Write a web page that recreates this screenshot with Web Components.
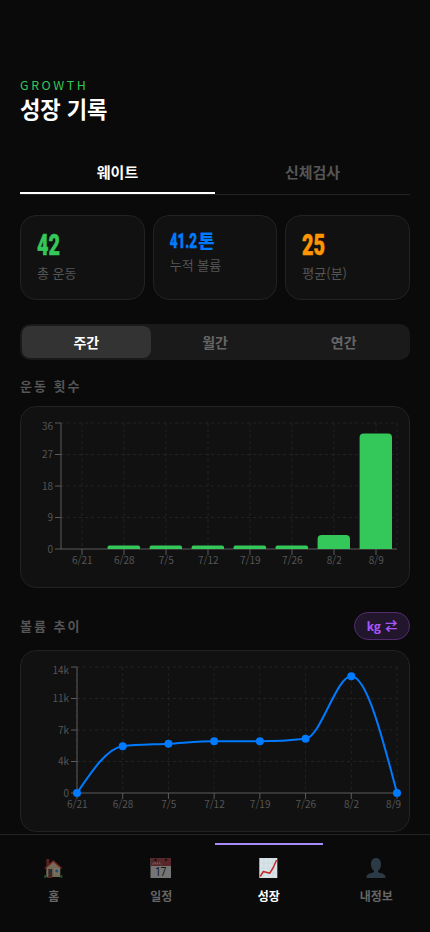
<!DOCTYPE html>
<html lang="ko">
<head>
<meta charset="utf-8">
<title>성장 기록</title>
<style>
html,body{margin:0;background:#0a0a0a}
body{width:430px;height:932px;overflow:hidden;color:#fff;font-family:"Noto Sans CJK KR",sans-serif}
</style>
</head>
<body>
<growth-app></growth-app>
<script>
const define = (name, html, setup) => customElements.define(name, class extends HTMLElement {
  connectedCallback() {
    if (this.shadowRoot) return;
    const t = document.createElement('template');
    t.innerHTML = typeof html === 'function' ? html(this) : html;
    this.attachShadow({mode: 'open'}).append(t.content.cloneNode(true));
    if (setup) setup(this);
  }
});

define('page-heading', `<style>
:host{display:block;height:47px;padding-top:76px}
.k{font-size:12.4px;line-height:18px;letter-spacing:2.6px;color:#34c759;height:17px}
h1{margin:0;font-size:22.2px;line-height:31px;font-weight:700;letter-spacing:-.1px;white-space:nowrap}
</style><div class="k"><slot name="kicker"></slot></div><h1><slot></slot></h1>`);

define('tab-item', `<style>
:host{display:block;flex:1;height:42px;line-height:40px;text-align:center;font-size:15px;font-weight:700;color:#555;box-sizing:border-box}
:host([active]){color:#fff;border-bottom:2px solid #fff}
</style><slot></slot>`);
define('tab-bar', `<style>
:host{display:flex;margin-top:29px;height:43px;box-shadow:inset 0 -1px #222}
</style><slot></slot>`);

define('stat-card', el => `<style>
:host{display:block;flex:1;box-sizing:border-box;height:85px;border:1px solid #222;border-radius:16px;background:#111;padding:14px 16px 0}
svg{display:block;overflow:visible;color:${el.getAttribute('color')}}
text{font-family:Roboto,"Noto Sans CJK KR",sans-serif;font-weight:900;fill:currentColor;stroke:currentColor;stroke-width:.5px}
.l{font-size:13px;line-height:18px;color:#555;white-space:nowrap}
</style>${el.hasAttribute('small')
 ? `<svg width="60" height="26"><text x="-.3" y="18.2" font-size="21" textLength="27.4" lengthAdjust="spacingAndGlyphs">${el.getAttribute('value')}</text><text x="28.2" y="18" style="font-family:'Noto Sans CJK KR';stroke-width:.1px" font-size="17.8">${el.getAttribute('unit')}</text></svg>`
 : `<svg width="60" height="34"><text x="-.1" y="25" font-size="29.5" textLength="23" lengthAdjust="spacingAndGlyphs">${el.getAttribute('value')}</text></svg>`}
<div class="l"><slot></slot></div>`);
define('stat-row', `<style>:host{display:flex;gap:8px;margin-top:20px}</style><slot></slot>`);

define('seg-item', `<style>
:host{display:block;flex:1;height:32px;line-height:32px;text-align:center;font-size:14px;font-weight:700;color:#666;border-radius:8px}
:host([active]){background:#333;color:#fff}
</style><slot></slot>`);
define('seg-control', `<style>
:host{display:flex;box-sizing:border-box;height:36px;padding:2px;margin-top:24px;background:#1a1a1a;border-radius:10px}
</style><slot></slot>`);

define('section-title', `<style>
:host{display:flex;justify-content:space-between;align-items:center;font-size:13px;font-weight:700;letter-spacing:2px;color:#555;line-height:18px}
</style><span><slot></slot></span><slot name="action"></slot>`);
define('unit-pill', `<style>
:host{display:flex;justify-content:center;box-sizing:border-box;width:56px;height:28px;line-height:26px;border:1px solid #532b71;border-radius:14px;background:#21162c;color:#a855f7;font-size:12px;font-weight:700;letter-spacing:0;word-spacing:1px;white-space:pre;-webkit-text-stroke:.15px #a855f7}
</style><slot></slot>`);

const LABELS = ['6/21','6/28','7/5','7/12','7/19','7/26','8/2','8/9'];

/* Monotone cubic interpolation through the points. */
function monotone(p) {
  const n = p.length, s = [], m = [];
  for (let i = 0; i < n - 1; i++) s.push((p[i+1][1]-p[i][1])/(p[i+1][0]-p[i][0]));
  for (let i = 1; i < n - 1; i++) {
    const a = s[i-1], b = s[i];
    m[i] = (Math.sign(a)+Math.sign(b))*Math.min(Math.abs(a),Math.abs(b),.5*Math.abs((a+b)/2)) || 0;
  }
  m[0] = (3*s[0]-m[1])/2;
  m[n-1] = (3*s[n-2]-m[n-2])/2;
  let d = `M${p[0]}`;
  for (let i = 0; i < n - 1; i++) {
    const h = (p[i+1][0]-p[i][0])/3;
    d += `C${p[i][0]+h},${p[i][1]+h*m[i]} ${p[i+1][0]-h},${p[i+1][1]-h*m[i+1]} ${p[i+1]}`;
  }
  return d;
}

define('growth-chart', el => {
  const line = el.getAttribute('type') === 'line';
  const vals = el.getAttribute('values').split(',').map(Number);
  const ticks = el.getAttribute('ticks').split(',');
  const max = +el.getAttribute('max');
  const L = line ? 56 : 40, R = 376, T = 16, B = 142;
  const xs = LABELS.map((_, i) => line ? L + i*(R-L)/7 : L + 21 + i*42);
  const y = v => B - v*(B-T)/max;
  let g = '';
  ticks.forEach((t, i) => {
    const ty = B - i*31.5;
    if (i) g += `<path class="g" d="M${L} ${ty}H${R}"/>`;
    g += `<path class="a" d="M${L-6} ${ty}H${L}"/><text text-anchor="end" x="${L-8}" y="${ty + (i === 4 ? 7.4 : 3.6)}">${t}</text>`;
  });
  (line ? xs : xs.concat(R)).forEach(x => g += `<path class="g" d="M${x} ${T}V${B}"/>`);
  g += `<path class="a" d="M${L} ${T}V${B}H${R}"/>`;
  LABELS.forEach((t, i) => {
    g += `<path class="a" d="M${xs[i]} ${B}v6"/><text text-anchor="middle" x="${xs[i] + .3 - (line && i === 7 ? 3.7 : 0)}" y="${B+15.2}">${t}</text>`;
  });
  if (line) {
    const p = vals.map((v, i) => [xs[i], y(v)]);
    g += `<path d="${monotone(p)}" fill="none" stroke="#007aff" stroke-width="2"/>` +
      p.map(q => `<circle cx="${q[0]}" cy="${q[1]}" r="4" fill="#007aff"/>`).join('');
  } else {
    vals.forEach((v, i) => {
      if (!v) return;
      const x = L + i*42 + 4.6, t = y(v), w = 32.4, r = Math.min(4, (B - t)/2);
      g += `<path fill="#34c759" d="M${x} ${B}V${t+r}a${r} ${r} 0 0 1 ${r} -${r}h${w-2*r}a${r} ${r} 0 0 1 ${r} ${r}V${B}z"/>`;
    });
  }
  return `<style>
:host{display:block;box-sizing:border-box;height:182px;border:1px solid #222;border-radius:16px;background:#111}
svg{display:block;overflow:visible}
text{font-size:10px;fill:#555;font-family:"Noto Sans CJK KR",sans-serif}
.g{stroke:#222;stroke-dasharray:3 3;fill:none}
.a{stroke:#5c5c5c;fill:none}
</style><svg width="388" height="180">${g}</svg>`;
});

const ICONS = {
home: `<g transform="translate(-.7 0)"><path d="M3 1h3v5L3 8z" fill="#a63a35"/><path d="M3 9l7-6 7 6v10H3z" fill="#e0c9a0"/><path d="M1 10L10 2l9 8-1 1-8-7-8 7z" fill="#d33d3d"/><path d="M5 11h4v8H5z" fill="#70483d"/><path d="M6 12h2v3H6z" fill="#405567"/><path d="M11 10.5h5v5h-5z" fill="#f4ebd8"/><path d="M12 11.5h3v3h-3z" fill="#3994d4"/><path d="M1 17h2v3H1zM17 17h2v3h-2z" fill="#398d4c"/><path d="M4 19h5v1H4z" fill="#aa453b"/></g>`,
calendar: `<g transform="translate(-.5 0)"><path d="M0 0h20.5v20H0z" fill="#e0e0e0"/><path d="M0 0h20.5v8H0z" fill="#a84448"/><circle cx="5" cy="2" r="1.3" fill="#222"/><circle cx="15.5" cy="2" r="1.3" fill="#222"/><path d="M1.5 6h2V4M5 4v2h2V4m2 0v2h2" fill="none" stroke="#ddd" stroke-width=".6"/><text x="10.2" y="18.2" font-family="Roboto,sans-serif" font-size="12" font-weight="400" text-anchor="middle" textLength="11" lengthAdjust="spacingAndGlyphs" fill="#252525">17</text></g>`,
growth: `<g transform="translate(-.7 0)"><path d="M1 0h18v20H1z" fill="#d8e3e8"/><path d="M5.5 0v20M10 0v20M14.5 0v20M1 5h18M1 10h18M1 15h18" stroke="#c6d2d7" stroke-width=".5"/><path d="M2 18.5l3-5 6.5 1.7L15 9.5l3.3-7.5" fill="none" stroke="#c62828" stroke-width="1.5" stroke-linejoin="round"/></g>`,
user: `<path d="M5 6.2C5 2 7 0 10 0s5 2 5 6.2c0 3.2-1.3 5.5-3 6.6v1.3c1 1 6.7 1.3 7.3 4L19.5 20H.5l.2-1.9c.6-2.7 6.3-3 7.3-4v-1.3c-1.7-1.1-3-3.4-3-6.6z" fill="#4c6a80"/>`
};
define('nav-item', el => `<style>
:host{display:flex;flex:1;flex-direction:column;align-items:center;box-sizing:border-box;padding-top:23px;position:relative;color:#666;font-size:12px;font-weight:700;line-height:18px}
svg{width:20px;height:20px;opacity:.5;margin-bottom:9px;overflow:visible}
:host([active]){color:#fff}
:host([active]) svg{opacity:1}
:host([active])::before{content:"";position:absolute;top:8px;left:0;right:0;height:2px;background:#a78bfa}
</style><svg viewBox="0 0 20 20">${ICONS[el.getAttribute('icon')]}</svg><slot></slot>`);
define('nav-bar', `<style>
:host{display:flex;position:absolute;left:0;top:834px;width:430px;height:98px;box-sizing:border-box;border-top:1px solid #222;background:#0a0a0a}
</style><slot></slot>`);

define('growth-app', `<style>
:host{display:block;width:430px;height:932px;overflow:hidden;position:relative}
main{padding:0 20px}
.t1{margin-top:17px;margin-bottom:11px}
.t2{margin-top:24px;margin-bottom:10px}
</style>
<main>
<page-heading><span slot="kicker">GROWTH</span>성장 기록</page-heading>
<tab-bar><tab-item active>웨이트</tab-item><tab-item>신체검사</tab-item></tab-bar>
<stat-row>
<stat-card color="#34c759" value="42">총 운동</stat-card>
<stat-card color="#007aff" small value="41.2" unit="톤">누적 볼륨</stat-card>
<stat-card color="#ff9500" value="25">평균(분)</stat-card>
</stat-row>
<seg-control><seg-item active>주간</seg-item><seg-item>월간</seg-item><seg-item>연간</seg-item></seg-control>
<section-title class="t1">운동 횟수</section-title>
<growth-chart type="bar" max="36" ticks="0,9,18,27,36" values="0,1,1,1,1,1,4,33"></growth-chart>
<section-title class="t2">볼륨 추이<unit-pill slot="action">kg ⇄</unit-pill></section-title>
<growth-chart type="line" max="14" ticks="0,4k,7k,11k,14k" values="0,5.2,5.48,5.76,5.76,6.04,12.96,0"></growth-chart>
</main>
<nav-bar>
<nav-item icon="home">홈</nav-item><nav-item icon="calendar">일정</nav-item><nav-item icon="growth" active>성장</nav-item><nav-item icon="user">내정보</nav-item>
</nav-bar>`);
</script>
</body>
</html>
